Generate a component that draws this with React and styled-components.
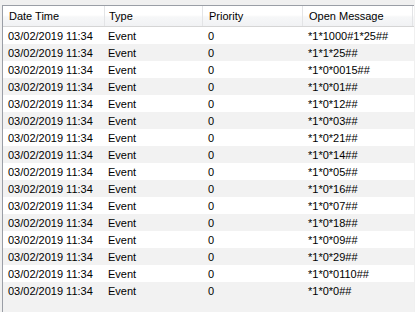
import styled, { createGlobalStyle } from "styled-components";

const GlobalStyle = createGlobalStyle`
  body {
    margin: 0;
    background: #f0f0f0;
    font-family: "Liberation Sans", Arial, sans-serif;
    font-size: 11px;
    color: #000;
  }
`;

const columns = [
  { key: "date", title: "Date Time", width: 102, pad: 5 },
  { key: "type", title: "Type", width: 98, pad: 3 },
  { key: "priority", title: "Priority", width: 100, pad: 5 },
  { key: "message", title: "Open Message", width: 110, pad: 5 },
];

const messages = [
  "*1*1000#1*25##",
  "*1*1*25##",
  "*1*0*0015##",
  "*1*0*01##",
  "*1*0*12##",
  "*1*0*03##",
  "*1*0*21##",
  "*1*0*14##",
  "*1*0*05##",
  "*1*0*16##",
  "*1*0*07##",
  "*1*0*18##",
  "*1*0*09##",
  "*1*0*29##",
  "*1*0*0110##",
  "*1*0*0##",
];

const rows = messages.map((message) => ({
  date: "03/02/2019 11:34",
  type: "Event",
  priority: "0",
  message,
}));

const gridCols = columns.map((c) => `${c.width}px`).join(" ");

const ListView = styled.div`
  margin: 5px 0 0 2px;
  width: 411px;
  height: 307px;
  border-top: 1px solid #9a9ea6;
  border-left: 1px solid #9a9ea6;
  background: #f2f2f2;
  overflow: hidden;
`;

const HeaderRow = styled.div`
  display: grid;
  grid-template-columns: ${gridCols};
  height: 20px;
  border-bottom: 1px solid #d5d5d5;
  background: linear-gradient(#ffffff 0%, #ffffff 45%, #f6f7f8 55%, #f1f2f4 100%);
`;

const HeaderCell = styled.div`
  padding: 1px 0 0 ${(p) => p.$pad + 1}px;
  line-height: 19px;
  border-right: 1px solid #e3e4e6;
  white-space: nowrap;
`;

const Row = styled.div`
  display: grid;
  grid-template-columns: ${gridCols};
  height: 17px;
  background: ${(p) => (p.$striped ? "#f2f2f2" : "#ffffff")};
`;

const Cell = styled.div`
  padding: 2px 0 0 ${(p) => p.$pad}px;
  line-height: 15px;
  white-space: nowrap;
  overflow: hidden;
`;

const App = () => {
  return (
    <>
      <GlobalStyle />
      <ListView>
        <HeaderRow>
          {columns.map((c) => (
            <HeaderCell key={c.key} $pad={c.pad}>
              {c.title}
            </HeaderCell>
          ))}
        </HeaderRow>
        {rows.map((row, i) => (
          <Row key={i} $striped={i % 2 === 1}>
            {columns.map((c) => (
              <Cell key={c.key} $pad={c.pad}>
                {row[c.key]}
              </Cell>
            ))}
          </Row>
        ))}
      </ListView>
    </>
  );
};

export default App;
